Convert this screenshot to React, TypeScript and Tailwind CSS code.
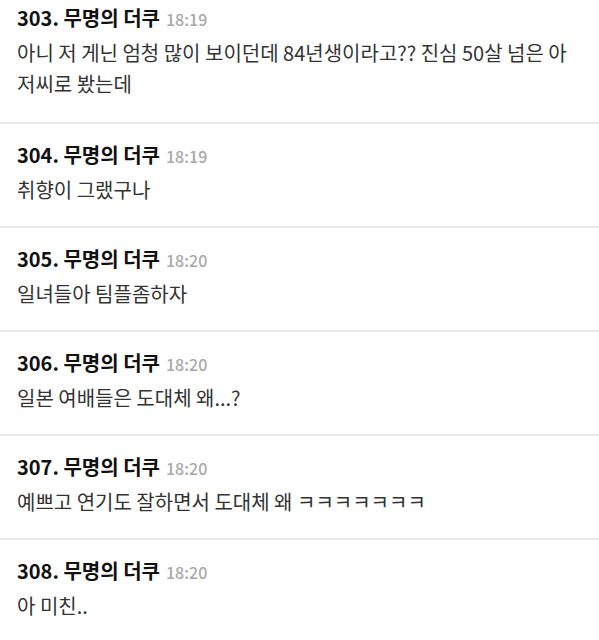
import React from "react";

const posts = [
  { no: 303, time: "18:19", body: "아니 저 게닌 엄청 많이 보이던데 84년생이라고?? 진심 50살 넘은 아저씨로 봤는데" },
  { no: 304, time: "18:19", body: "취향이 그랬구나" },
  { no: 305, time: "18:20", body: "일녀들아 팀플좀하자" },
  { no: 306, time: "18:20", body: "일본 여배들은 도대체 왜...?" },
  { no: 307, time: "18:20", body: "예쁘고 연기도 잘하면서 도대체 왜 ㅋㅋㅋㅋㅋㅋㅋ" },
  { no: 308, time: "18:20", body: "아 미친.." },
];

export default function App() {
  return (
    <div
      className="w-[599px] h-[640px] overflow-hidden bg-white"
      style={{ fontFamily: '"Noto Sans CJK KR", "Noto Sans", sans-serif' }}
    >
      {posts.map((p, i) => (
        <div
          key={p.no}
          className={`border-b-2 border-[#e8e8e8] pl-[17px] pr-[20px] ${i === 0 ? "pt-[4px] pb-[23px]" : "pt-[17px] pb-[21px]"}`}
        >
          <div className="flex items-baseline gap-[6px] h-[28px] leading-[28px]">
            <span className="text-[20px] font-bold text-[#111]">{p.no}. 무명의 더쿠</span>
            <span className="text-[16px] font-medium text-[#a8a8a8]">{p.time}</span>
          </div>
          <div className="mt-[5px] text-[20px] leading-[31px] text-[#333]">{p.body}</div>
        </div>
      ))}
    </div>
  );
}
